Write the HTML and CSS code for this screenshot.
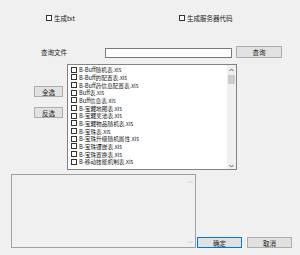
FILE: index.html
```html
<!DOCTYPE html>
<html>
<head>
<meta charset="utf-8">
<link rel="stylesheet" href="styles.css">
</head>
<body>
<div class="dlg">
  <div class="opts">
    <div class="chk"><span class="box"></span><span>生成txt</span></div>
    <div class="chk"><span class="box"></span><span>生成服务器代码</span></div>
  </div>
  <div class="query">
    <span class="qlabel">查询文件</span>
    <span class="input"></span>
    <span class="btn qbtn">查询</span>
  </div>
  <div class="main">
    <div class="side">
      <span class="btn sbtn">全选</span>
      <span class="btn sbtn">反选</span>
    </div>
    <div class="list">
      <div class="items">
        <div class="item"><span class="box"></span>B-Buff随机表.xls</div>
        <div class="item"><span class="box"></span>B-Buff的配置表.xls</div>
        <div class="item"><span class="box"></span>B-Buff药信息配置表.xls</div>
        <div class="item"><span class="box"></span>Buff表.xls</div>
        <div class="item"><span class="box"></span>Buff信息表.xls</div>
        <div class="item"><span class="box"></span>B-宝藏地图表.xls</div>
        <div class="item"><span class="box"></span>B-宝藏奖池表.xls</div>
        <div class="item"><span class="box"></span>B-宝藏物品随机表.xls</div>
        <div class="item"><span class="box"></span>B-宝珠表.xls</div>
        <div class="item"><span class="box"></span>B-宝珠升级随机属性.xls</div>
        <div class="item"><span class="box"></span>B-宝珠镶嵌表.xls</div>
        <div class="item"><span class="box"></span>B-宝珠置换表.xls</div>
        <div class="item"><span class="box"></span>B-移动技能机制表.xls</div>
      </div>
      <div class="vscroll">
        <svg class="arr" width="9" height="6" viewBox="0 0 9 6"><path d="M2.5 4 L4.5 2 L6.5 4" fill="none" stroke="#606060" stroke-width="1"/></svg>
        <span class="thumb"></span>
        <span class="track"></span>
        <svg class="arr" width="9" height="6" viewBox="0 0 9 6"><path d="M2.5 2 L4.5 4 L6.5 2" fill="none" stroke="#606060" stroke-width="1"/></svg>
      </div>
    </div>
  </div>
  <div class="bottom">
    <div class="log">
      <div class="logtext"></div>
      <div class="vscroll dis">
        <svg class="arr" width="9" height="6" viewBox="0 0 9 6"><path d="M2.5 4 L4.5 2 L6.5 4" fill="none" stroke="#c8c8c8" stroke-width="1"/></svg>
        <span class="track"></span>
        <svg class="arr" width="9" height="6" viewBox="0 0 9 6"><path d="M2.5 2 L4.5 4 L6.5 2" fill="none" stroke="#c8c8c8" stroke-width="1"/></svg>
      </div>
    </div>
    <span class="btn ok">确定</span>
    <span class="btn cancel">取消</span>
  </div>
</div>
</body>
</html>
```

FILE: styles.css
```css
* { box-sizing: border-box; }
html, body {
  margin: 0;
  padding: 0;
  background: #f0f0f0;
}
body {
  font-family: "Noto Sans CJK SC", "Noto Sans", sans-serif;
  font-size: 5.7px;
  color: #1a1a1a;
}
.dlg {
  width: 300px;
  height: 255px;
  overflow: hidden;
}
.opts {
  display: grid;
  grid-template-columns: 133px auto;
  padding: 14px 0 0 46px;
  height: 22px;
}
.chk {
  display: flex;
  align-items: center;
  height: 8px;
  gap: 2px;
  font-size: 6.5px;
}
.box {
  display: inline-block;
  width: 6px;
  height: 6px;
  border: 1px solid #333;
  background: #fff;
  flex: none;
}
.query {
  display: flex;
  align-items: center;
  margin-top: 24px;
  height: 12px;
}
.qlabel {
  margin-left: 41px;
  width: 64px;
  font-size: 6.5px;
}
.input {
  width: 127px;
  height: 10px;
  margin-top: 2px;
  background: #fff;
  border: 1px solid #7a7a7a;
}
.btn {
  display: flex;
  align-items: center;
  justify-content: center;
  background: #e1e1e1;
  border: 1px solid #adadad;
  font-size: 6.5px;
}
.qbtn {
  margin-left: 4px;
  width: 46px;
  height: 12px;
}
.main {
  display: flex;
  margin-top: 6px;
  height: 106px;
}
.side {
  display: flex;
  flex-direction: column;
  gap: 10px;
  margin-left: 34px;
  padding-top: 22px;
  width: 29px;
}
.sbtn {
  height: 11px;
}
.list {
  display: flex;
  margin-left: 4px;
  width: 170px;
  height: 106px;
  background: #fff;
  border: 1px solid #828282;
}
.items {
  flex: 1;
  padding-top: 1px;
  overflow: hidden;
}
.item {
  display: flex;
  align-items: center;
  height: 7.67px;
  gap: 2px;
  padding-left: 3px;
  white-space: nowrap;
}
.vscroll {
  display: flex;
  flex-direction: column;
  width: 9px;
  background: #f0f0f0;
  padding-top: 2px;
}
.arr {
  display: block;
  flex: none;
}
.thumb {
  display: block;
  margin: 2px 1px 0;
  height: 9px;
  background: #cdcdcd;
}
.track {
  flex: 1;
}
.bottom {
  display: flex;
  align-items: flex-end;
  margin-top: 4px;
  height: 74px;
}
.log {
  display: flex;
  margin-left: 11px;
  width: 185px;
  height: 74px;
  border: 1px solid #a0a0a0;
  background: #f0f0f0;
}
.logtext {
  flex: 1;
}
.vscroll.dis {
  padding-top: 4px;
  padding-bottom: 2px;
}
.ok {
  margin-left: 1px;
  width: 45px;
  height: 11px;
  border-color: #0078d7;
}
.cancel {
  margin-left: 5px;
  width: 45px;
  height: 11px;
}
```
